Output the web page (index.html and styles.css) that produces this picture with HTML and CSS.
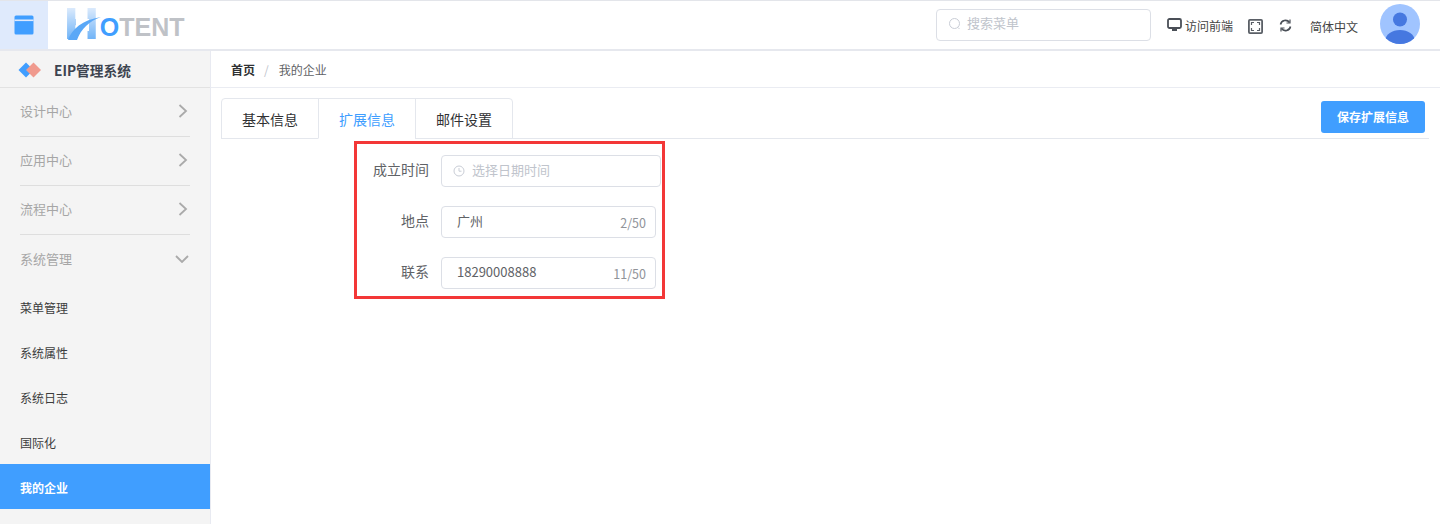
FILE: index.html
```html
<!DOCTYPE html>
<html lang="zh-CN">
<head>
<meta charset="utf-8">
<title>我的企业</title>
<link rel="stylesheet" href="styles.css">
</head>
<body>
<div class="app">
  <header class="topbar">
    <div class="toggle">
      <svg width="20" height="20" viewBox="0 0 20 20"><rect x="0.5" y="0.5" width="19" height="19" rx="1.5" fill="#409eff"/><rect x="0.5" y="4.5" width="19" height="1.6" fill="#dfeafc"/></svg>
    </div>
    <div class="logo">
      <span class="logo-h">H</span><span class="logo-o">O</span><span class="logo-rest">TENT</span>
      <svg class="logo-swoosh" width="40" height="34" viewBox="0 0 40 34"><path d="M13 11H26V23H13Z" fill="#fff"/><path d="M5 32C9 21 19 12 38 9C26 13 18 21 14 32Z" fill="#5aa8f7"/></svg>
    </div>
    <div class="topbar-right">
      <div class="search">
        <svg class="search-icon" width="14" height="14" viewBox="0 0 14 14" fill="none" stroke="#c9cdd6" stroke-width="1"><circle cx="6.5" cy="6.5" r="5"/><path d="M10 10.5l1.500 1.500"/></svg>
        <span class="search-text">搜索菜单</span>
      </div>
      <div class="action visit">
        <svg width="15" height="14" viewBox="0 0 15 14"><rect x="1" y="1" width="13" height="9" rx="1.500" fill="none" stroke="#4a4f57" stroke-width="1.800"/><rect x="5" y="11" width="5" height="2" fill="#4a4f57"/></svg>
        <span>访问前端</span>
      </div>
      <svg class="full" width="15" height="15" viewBox="0 0 15 15" fill="none"><rect x="0.900" y="0.900" width="13.200" height="13.200" rx="1" stroke="#5a5f66" stroke-width="1.800"/><path d="M3.500 6V3.500H6M9 3.500h2.500V6M11.500 9v2.500H9M6 11.500H3.500V9" stroke="#5a5f66" stroke-width="1.200"/></svg>
      <svg class="refresh" width="13" height="13" viewBox="0 0 13 13" fill="none" stroke="#4a4f57" stroke-width="1.600"><path d="M1.500 5.500A5 5 0 0 1 10.500 3.500"/><path d="M11.500 7.500A5 5 0 0 1 2.500 9.500"/><path d="M11 0.500v3.500H7.500" stroke-width="1.200"/><path d="M2 12.500V9h3.500" stroke-width="1.200"/></svg>
      <span class="lang">简体中文</span>
      <svg class="avatar" width="40" height="40" viewBox="0 0 40 40"><defs><clipPath id="av"><circle cx="20" cy="20" r="20"/></clipPath></defs><circle cx="20" cy="20" r="20" fill="#a0c4ff"/><g clip-path="url(#av)" fill="#4678e0"><circle cx="20" cy="15.500" r="7"/><ellipse cx="20" cy="36" rx="14.500" ry="10"/></g></svg>
    </div>
  </header>
  <div class="body">
    <aside class="sidebar">
      <div class="brand">
        <svg width="24" height="16" viewBox="0 0 24 16"><path d="M8 0.500L15.500 8L8 15.500L0.500 8Z" fill="#409eff"/><path d="M15.500 0.500L23 8L15.500 15.500L8 8Z" fill="#f09a8e"/></svg>
        <span>EIP管理系统</span>
      </div>
      <div class="group"><span>设计中心</span><svg class="arrow" width="10" height="16" viewBox="0 0 10 16" fill="none"><path d="M1.500 2L8 8L1.500 14" stroke="#aaa" stroke-width="1.800"/></svg></div>
      <div class="group"><span>应用中心</span><svg class="arrow" width="10" height="16" viewBox="0 0 10 16" fill="none"><path d="M1.500 2L8 8L1.500 14" stroke="#aaa" stroke-width="1.800"/></svg></div>
      <div class="group"><span>流程中心</span><svg class="arrow" width="10" height="16" viewBox="0 0 10 16" fill="none"><path d="M1.500 2L8 8L1.500 14" stroke="#aaa" stroke-width="1.800"/></svg></div>
      <div class="group open"><span>系统管理</span><svg class="arrow-down" width="14" height="8" viewBox="0 0 14 8" fill="none"><path d="M1 1L7 7L13 1" stroke="#aaa" stroke-width="1.800"/></svg></div>
      <div class="item">菜单管理</div>
      <div class="item">系统属性</div>
      <div class="item">系统日志</div>
      <div class="item">国际化</div>
      <div class="item active">我的企业</div>
    </aside>
    <main class="main">
      <nav class="crumbs"><b>首页</b><i>/</i><span>我的企业</span></nav>
      <div class="content">
        <div class="tabbar">
          <div class="tabs">
            <div class="tab">基本信息</div>
            <div class="tab current">扩展信息</div>
            <div class="tab">邮件设置</div>
          </div>
          <button class="save">保存扩展信息</button>
        </div>
        <form class="form">
          <div class="row">
            <label>成立时间</label>
            <div class="field wide">
              <svg width="12" height="12" viewBox="0 0 12 12" fill="none" stroke="#c9cdd6"><circle cx="6" cy="6" r="5"/><path d="M6 3v3.200h2.500"/></svg>
              <span class="ph">选择日期时间</span>
            </div>
          </div>
          <div class="row">
            <label>地点</label>
            <div class="field"><span class="val">广州</span><span class="count">2/50</span></div>
          </div>
          <div class="row">
            <label>联系</label>
            <div class="field"><span class="val">18290008888</span><span class="count">11/50</span></div>
          </div>
        </form>
      </div>
    </main>
  </div>
</div>
</body>
</html>
```
FILE: styles.css
```css
* { box-sizing: border-box; }
html, body { margin: 0; height: 100%; overflow: hidden; }
body {
  background: #fff;
  font-family: "Noto Sans CJK SC", "Open Sans", sans-serif;
  color: #303133;
  font-size: 13px;
}
.app { height: 524px; display: flex; flex-direction: column; }
.topbar {
  height: 51px;
  flex: none;
  display: flex;
  align-items: center;
  border-top: 1px solid #e3e5ea;
  border-bottom: 2px solid #e6e8ee;
  position: relative;
}
.toggle {
  width: 48px;
  height: 48px;
  background: #dfeafc;
  display: flex;
  align-items: center;
  justify-content: center;
}
.logo {
  position: relative;
  margin: 0 0 2px 15px;
  display: flex;
  align-items: flex-end;
  height: 32px;
  font-family: "Liberation Sans", sans-serif;
  font-weight: 700;
  line-height: 1;
}
.logo-h {
  font-family: "DejaVu Sans", sans-serif;
  font-size: 44px;
  line-height: 32px;
  height: 32px;
  display: block;
  background: linear-gradient(180deg, #dbeafc, #6db2f7);
  -webkit-background-clip: text;
  background-clip: text;
  color: transparent;
}
.logo-o { font-size: 25px; color: #409eff; }
.logo-rest { font-size: 25px; color: #bfc2c7; }
.logo-swoosh { position: absolute; left: 0; top: 0; }
.topbar-right { margin-left: auto; display: flex; align-items: center; }
.search {
  width: 215px;
  height: 32px;
  border: 1px solid #dcdfe6;
  border-radius: 4px;
  display: flex;
  align-items: center;
  gap: 5px;
  padding-left: 11px;
  color: #c0c4cc;
  font-size: 13px;
}
.search-icon { margin-bottom: 2px; }
.search-text { margin-bottom: 5px; }
.action { display: flex; align-items: center; margin-left: 16px; font-size: 12px; color: #444; gap: 3px; }
.full { margin-left: 15px; margin-top: 2px; }
.refresh { margin-left: 16px; }
.lang { margin-left: 18px; font-size: 12px; color: #444; padding-top: 2px; }
.avatar { margin-left: 22px; margin-right: 20px; margin-bottom: 2px; }
.body { flex: 1; display: flex; min-height: 0; }
.sidebar {
  width: 211px;
  flex: none;
  background: #f4f4f4;
  border-right: 1px solid #e8eaf1;
}
.brand {
  height: 37px;
  display: flex;
  align-items: center;
  gap: 12px;
  padding-left: 18px;
  padding-top: 1px;
  border-bottom: 1px solid #e2e2e2;
  font-weight: 700;
  font-size: 13.700px;
  color: #3d4450;
}
.group {
  height: 49px;
  margin: 0 20px;
  display: flex;
  align-items: center;
  justify-content: space-between;
  border-bottom: 1px solid #dedede;
  color: #a6a6a6;
  font-size: 13px;
}
.group span { margin-bottom: 3px; }
.group .arrow { margin: 0 2px 2px 0; }
.group.open { border-bottom: 0; }
.group .arrow-down { margin: 0 1px 2px 0; }
.item {
  height: 45px;
  padding-left: 20px;
  padding-top: 2px;
  display: flex;
  align-items: center;
  font-size: 12px;
  color: #3c3c3c;
}
.item.active { background: #409eff; color: #fff; font-weight: 700; }
.main { flex: 1; min-width: 0; }
.crumbs {
  height: 37px;
  display: flex;
  align-items: center;
  padding-left: 20px;
  font-size: 12px;
  border-bottom: 1px solid #eaecf2;
}
.crumbs b { color: #303133; }
.crumbs i { color: #c0c4cc; margin: 0 10px 0 9px; font-style: normal; }
.crumbs span { color: #606266; }
.content { padding: 10px 11px 0 10px; }
.tabbar {
  height: 41px;
  display: flex;
  justify-content: space-between;
  border-bottom: 1px solid #e4e7ed;
}
.tabs {
  display: flex;
  height: 41px;
  border: 1px solid #e4e7ed;
  border-radius: 4px 4px 0 0;
}
.tab {
  width: 97px;
  display: flex;
  align-items: center;
  justify-content: center;
  font-size: 14px;
  color: #303133;
  border-left: 1px solid #e4e7ed;
}
.tab:first-child { border-left: 0; width: 96px; }
.tab.current { color: #409eff; border-bottom: 1px solid #fff; height: 40px; }
.save {
  width: 104px;
  height: 32px;
  margin: 3px 4px 0 0;
  padding: 0 0 2px;
  background: #409eff;
  border: 0;
  border-radius: 3px;
  color: #fff;
  font-family: inherit;
  font-weight: 700;
  font-size: 12px;
}
.form {
  width: 311px;
  height: 158px;
  margin: 2px 0 0 133px;
  border: 3px solid #f33737;
  padding: 11px 0 0;
  display: flex;
  flex-direction: column;
  gap: 19px;
}
.row { display: flex; align-items: center; height: 32px; }
.row label { width: 72px; text-align: right; margin-right: 12px; font-size: 14px; color: #606266; padding-bottom: 4px; }
.field {
  width: 215px;
  height: 32px;
  border: 1px solid #dcdfe6;
  border-radius: 4px;
  display: flex;
  align-items: center;
  font-size: 13px;
  color: #606266;
  padding: 0 9px 0 15px;
}
.field.wide { width: 220px; padding-left: 11px; gap: 7px; }
.ph { color: #c0c4cc; padding-bottom: 4px; }
.val { flex: 1; padding-bottom: 4px; }
.count { font-size: 12.500px; color: #909399; padding-top: 1px; }
```
